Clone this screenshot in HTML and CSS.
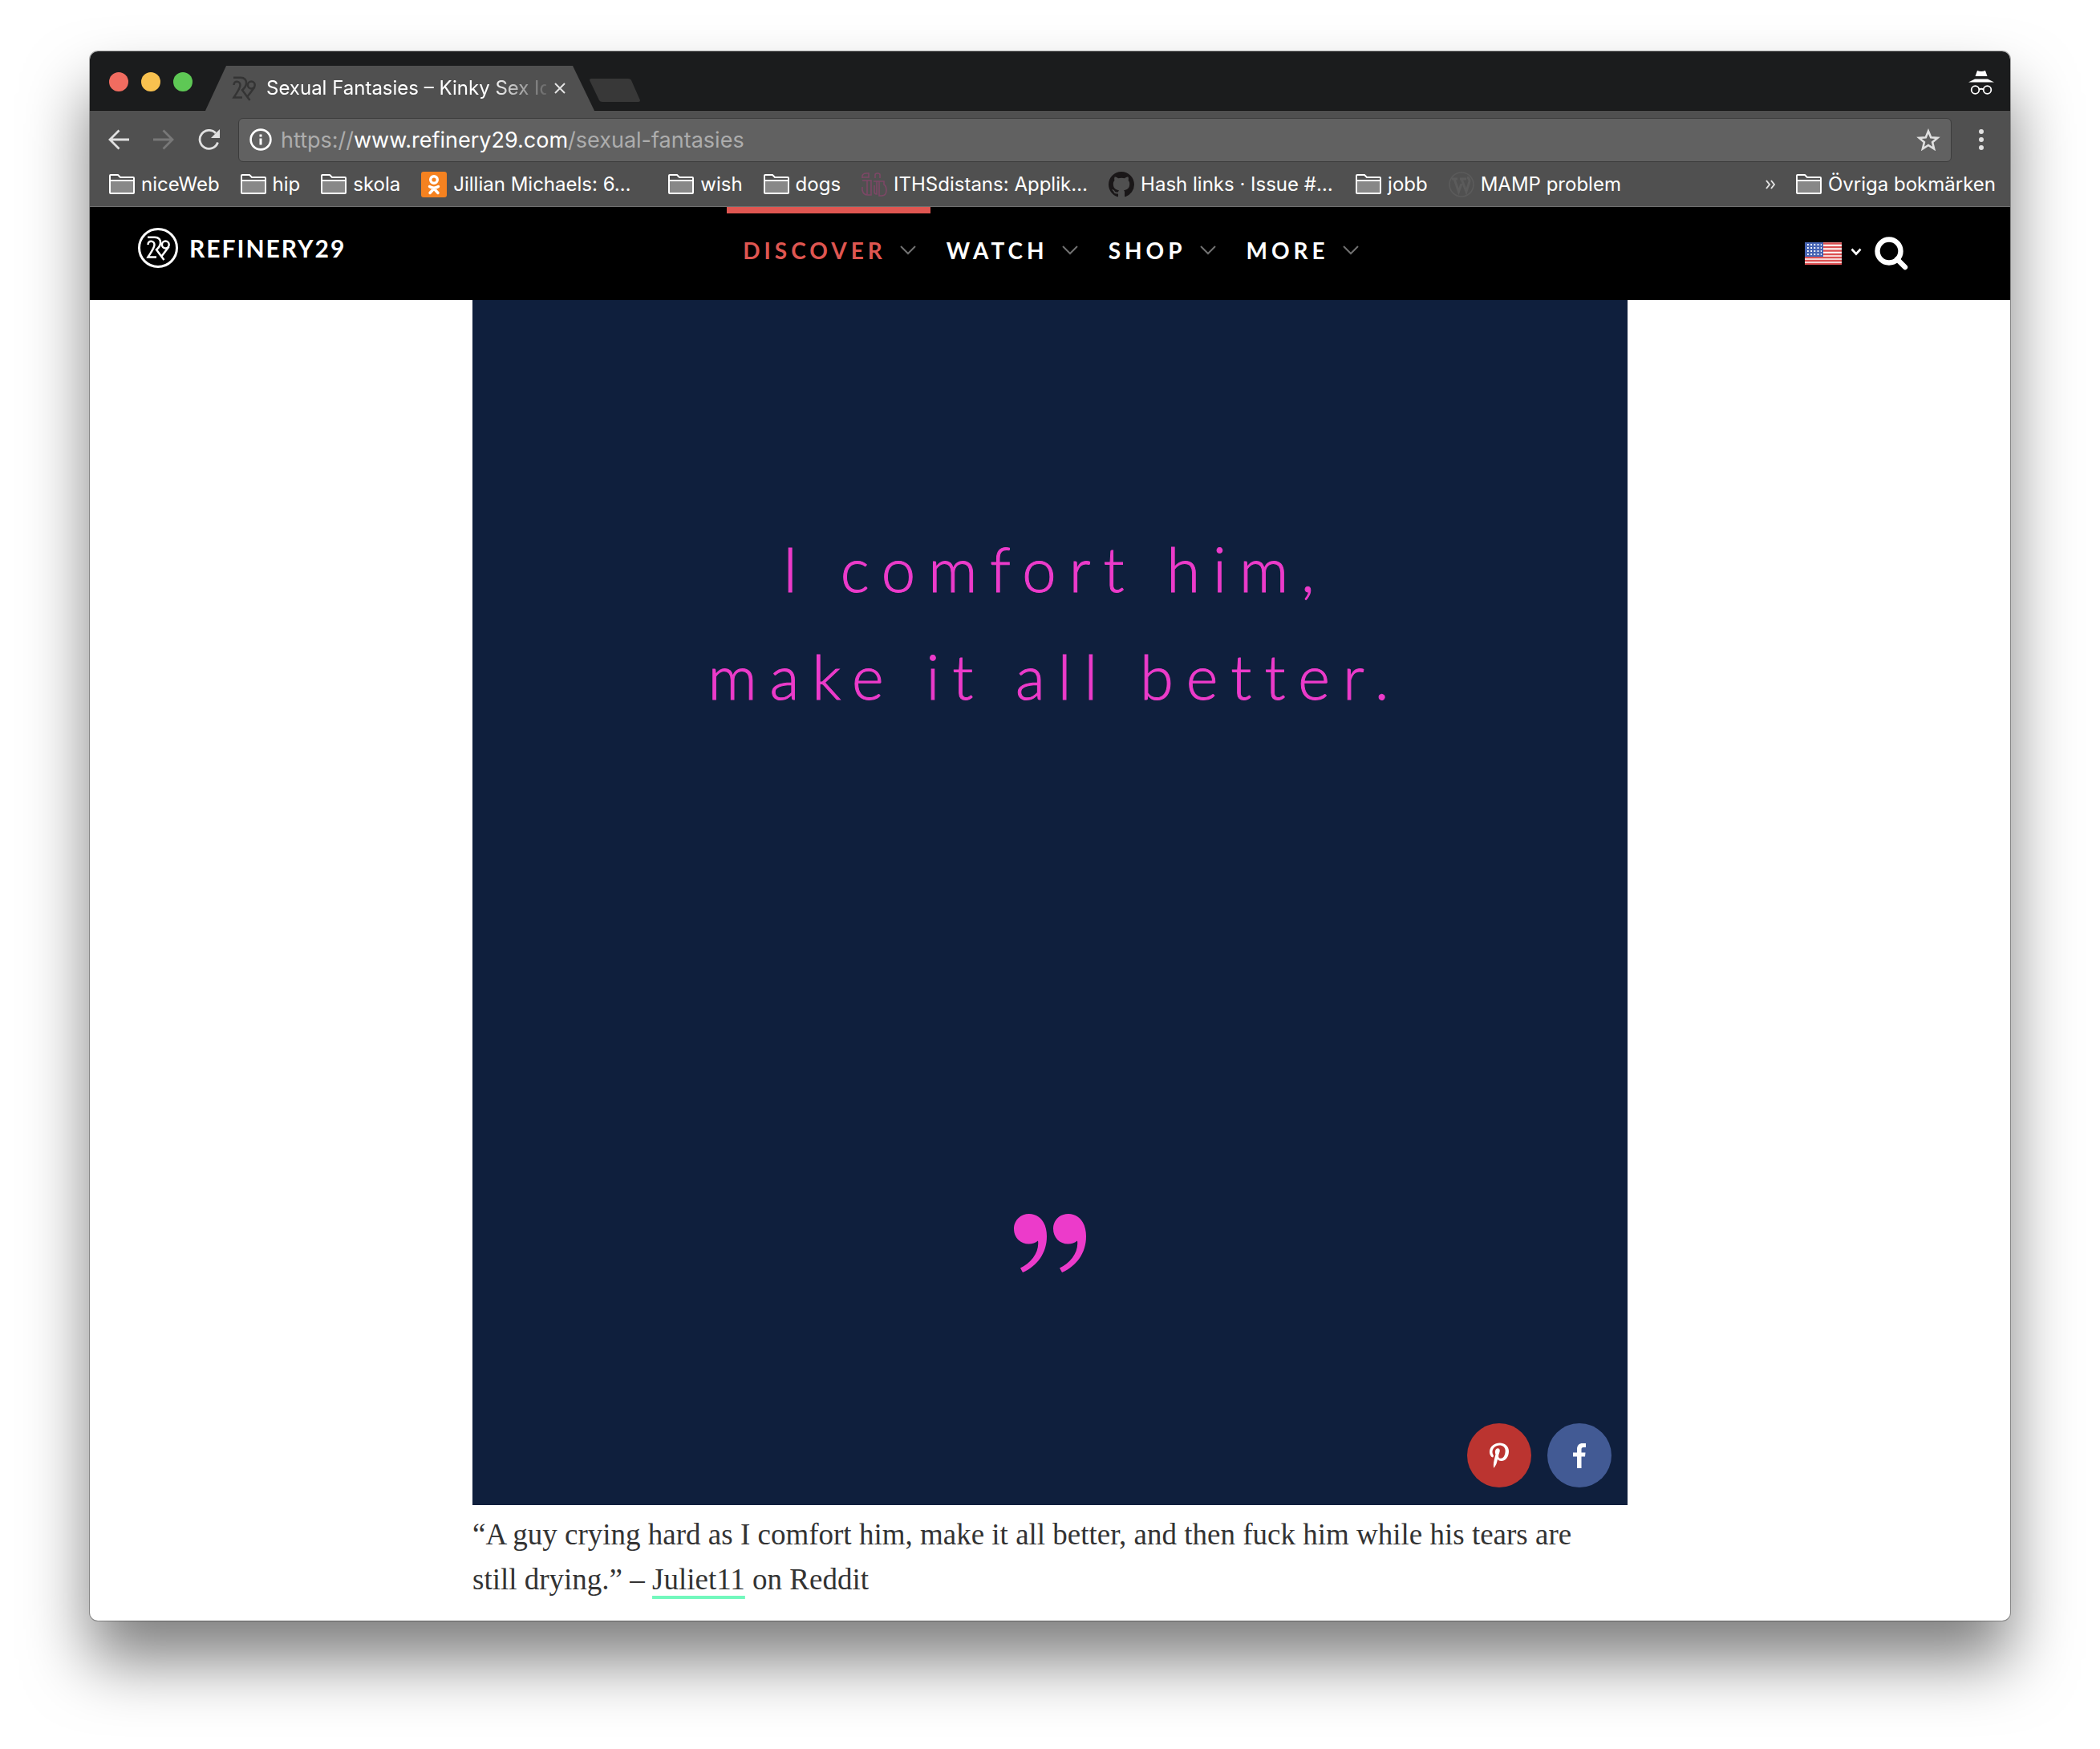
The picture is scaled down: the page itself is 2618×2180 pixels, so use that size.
FILE: index.html
```html
<!DOCTYPE html>
<html lang="en">
<head>
<meta charset="utf-8">
<title>Sexual Fantasies – Kinky Sex Ideas</title>
<link rel="stylesheet" href="styles.css">
</head>
<body>
<svg class="sprite" aria-hidden="true">
  <symbol id="folder" viewBox="0 0 32 25">
    <path d="M1 8h30v16H1z" fill="#888"/>
    <path d="M1 22V2q0-1 1-1h9l3 3h16q1 0 1 1v18q0 1-1 1H2q-1 0-1-1zM1 8h30" fill="none" stroke="#fff" stroke-width="2"/>
  </symbol>
  <symbol id="monogram" viewBox="0 0 30 31">
    <g fill="none" stroke="currentColor" stroke-width="2.500">
      <path d="M2 1.800h9c5 0 7.500 3 7 7.500-.5 3.500-2.500 6-5 8L22.500 30"/>
      <path d="M2.500 11c0-6 8-5.500 8 0 0 4-4 9-8 15.500h10.500"/>
      <circle cx="24.300" cy="11" r="4.400"/>
      <path d="M28.500 13.500L19 26"/>
    </g>
  </symbol>
  <symbol id="chevron" viewBox="0 0 20 12">
    <path d="M1 1l9 9 9-9" fill="none" stroke="currentColor" stroke-width="2"/>
  </symbol>
</svg>

<div class="window">
  <header class="tabstrip">
    <div class="lights">
      <button class="light light-close" aria-label="Close window"></button>
      <button class="light light-min" aria-label="Minimize"></button>
      <button class="light light-max" aria-label="Zoom"></button>
    </div>
    <div class="tab">
      <svg class="tab-icon" aria-hidden="true"><use href="#monogram"/></svg>
      <span class="tab-title">Sexual Fantasies – Kinky Sex Ideas</span>
      <button class="tab-close" aria-label="Close tab"><svg viewBox="0 0 14 14" width="14" height="14"><path d="M1 1l12 12M13 1L1 13" stroke="#e4e4e4" stroke-width="2"/></svg></button>
    </div>
    <button class="new-tab" aria-label="New tab"><svg viewBox="0 0 63 29" width="63" height="29"><path d="M2 0h46q3 0 4 2l11 25q0 2-2 2H16q-3 0-4-2L0 2q0-2 2-2z" fill="#383838"/></svg></button>
    <svg class="incognito" viewBox="0 0 32 30" width="32" height="30" fill="#fff" role="img" aria-label="Incognito">
      <path d="M11 0q5 2 10 0l2.500 7H8.500zM8 10.500h16l8 4H0z"/>
      <g fill="none" stroke="#fff" stroke-width="1.800"><circle cx="8.500" cy="24" r="4.800"/><circle cx="23.500" cy="24" r="4.800"/><path d="M13 23.500q3-1.500 6 0"/></g>
    </svg>
  </header>

  <div class="toolbar">
    <button class="tool" aria-label="Back"><svg viewBox="0 0 26 26" width="26" height="26"><path d="M26 13H2M13.500 1.500L2 13l11.500 11.500" fill="none" stroke="#e0e0e0" stroke-width="2.800"/></svg></button>
    <button class="tool" aria-label="Forward" disabled><svg viewBox="0 0 26 26" width="26" height="26"><path d="M0 13h24M12.500 1.500L24 13 12.500 24.500" fill="none" stroke="#787878" stroke-width="2.800"/></svg></button>
    <button class="tool" aria-label="Reload"><svg viewBox="0 0 28 26" width="28" height="26"><path d="M22 5A11.500 11.500 0 1 0 24.500 16.500" fill="none" stroke="#e0e0e0" stroke-width="2.800"/><path d="M27 0v11H16z" fill="#e0e0e0"/></svg></button>
    <div class="omnibox">
      <svg viewBox="0 0 28 28" width="28" height="28" aria-hidden="true"><circle cx="14" cy="14" r="12.400" fill="none" stroke="#fff" stroke-width="2.600"/><path d="M12.500 7.500h3v3h-3zM12.500 12.500h3v8h-3z" fill="#fff"/></svg>
      <div class="url" role="textbox" aria-label="Address" contenteditable="true" spellcheck="false">https://<b>www.refinery29.com</b>/sexual-fantasies</div>
      <button class="star" aria-label="Bookmark this page"><svg viewBox="0 0 30 28" width="30" height="28"><path d="M15 3.500l3.200 7.800 8.300.6-6.400 5.400 2 8.200L15 21l-7.100 4.500 2-8.200-6.400-5.400 8.300-.6z" fill="none" stroke="#e0e0e0" stroke-width="2.600"/></svg></button>
    </div>
    <button class="menu" aria-label="Menu"><svg viewBox="0 0 6 26" width="6" height="26" fill="#e0e0e0"><circle cx="3" cy="3" r="3"/><circle cx="3" cy="13" r="3"/><circle cx="3" cy="23" r="3"/></svg></button>
  </div>

  <nav class="bookmarks" aria-label="Bookmarks">
    <a class="mark" href="#"><svg class="folder"><use href="#folder"/></svg><span>niceWeb</span></a>
    <a class="mark" href="#"><svg class="folder"><use href="#folder"/></svg><span>hip</span></a>
    <a class="mark" href="#"><svg class="folder"><use href="#folder"/></svg><span>skola</span></a>
    <a class="mark mark-site" href="#"><svg viewBox="0 0 32 32" width="32" height="32"><rect width="32" height="32" rx="3" fill="#f58220"/><g fill="none" stroke="#fff" stroke-width="3.400" stroke-linecap="round"><circle cx="16" cy="10" r="4.300"/><path d="M10.500 18.500q5.500 3.500 11 0M16 21l-5 5.500M16 21l5 5.500"/></g></svg><span>Jillian Michaels: 6…</span></a>
    <a class="mark" href="#"><svg class="folder"><use href="#folder"/></svg><span>wish</span></a>
    <a class="mark" href="#"><svg class="folder"><use href="#folder"/></svg><span>dogs</span></a>
    <a class="mark mark-site" href="#"><svg viewBox="0 0 32 32" width="32" height="32"><g fill="none" stroke="#7d4766" stroke-width="1.600"><path d="M1 8V5q1-3 5-3h3v5H1M17 8V4q0-2 3-2t3 2v4M1 11h11v18H8q-6 0-7-6v-4M7 11v17M15 12h13v4q3 2 3 7 0 7-6 7h-3V12M16 17v8q0 3 3 3V12"/></g></svg><span>ITHSdistans: Applik…</span></a>
    <a class="mark mark-site" href="#"><svg viewBox="0 0 16 16" width="32" height="32"><path fill="#1a1718" d="M8 0C3.580 0 0 3.580 0 8c0 3.540 2.290 6.530 5.470 7.590.4.070.55-.17.55-.38 0-.19-.01-.82-.01-1.490-2.010.37-2.530-.49-2.690-.94-.09-.23-.48-.94-.82-1.130-.28-.15-.68-.52-.01-.53.63-.01 1.080.58 1.230.82.72 1.210 1.870.87 2.330.66.070-.52.28-.87.51-1.070-1.780-.2-3.640-.89-3.640-3.950 0-.87.31-1.590.82-2.150-.08-.2-.36-1.020.08-2.120 0 0 .67-.21 2.200.82.64-.18 1.320-.27 2-.27s1.360.09 2 .27c1.530-1.040 2.200-.82 2.200-.82.44 1.100.16 1.920.08 2.120.51.56.82 1.270.82 2.150 0 3.070-1.870 3.750-3.650 3.950.29.25.54.73.54 1.480 0 1.070-.01 1.930-.01 2.200 0 .21.15.46.55.38A8.010 8.010 0 0 0 16 8c0-4.420-3.580-8-8-8z"/></svg><span>Hash links · Issue #…</span></a>
    <a class="mark" href="#"><svg class="folder"><use href="#folder"/></svg><span>jobb</span></a>
    <a class="mark" href="#"><svg viewBox="0 0 32 32" width="32" height="32"><g fill="none" stroke="#5b5b5b"><circle cx="16" cy="16" r="15" stroke-width="1.600"/><path d="M4 9h7M14 9h8M7 9l5.500 16L16 15M16 9l6 16 4-13q0-4-3-5" stroke-width="3"/></g></svg><span>MAMP problem</span></a>
    <button class="more" aria-label="More bookmarks"><svg viewBox="0 0 12 12" width="12" height="12"><path d="M1 1l4 5-4 5M7 1l4 5-4 5" fill="none" stroke="#e0e0e0" stroke-width="2"/></svg></button>
    <a class="mark" href="#"><svg class="folder"><use href="#folder"/></svg><span>Övriga bokmärken</span></a>
  </nav>

  <header class="site">
    <a class="brand" href="#">
      <span class="brand-ring"><svg class="brand-icon" aria-hidden="true"><use href="#monogram"/></svg></span>
      <span>REFINERY29</span>
    </a>
    <nav class="sections" aria-label="Sections">
      <a class="section section-on" href="#">DISCOVER<svg class="chev"><use href="#chevron"/></svg></a>
      <a class="section" href="#">WATCH<svg class="chev"><use href="#chevron"/></svg></a>
      <a class="section" href="#">SHOP<svg class="chev"><use href="#chevron"/></svg></a>
      <a class="section" href="#">MORE<svg class="chev"><use href="#chevron"/></svg></a>
    </nav>
    <div class="utilities">
      <button class="locale" aria-label="Choose edition">
        <svg viewBox="0 0 46 28" width="46" height="28">
          <path fill="#fff" d="M0 0h46v28H0z"/>
          <path d="M0 1.500h46M0 6h46M0 10.500h46M0 15h46M0 19h46M0 23h46M0 27h46" stroke="#dc5052" stroke-width="2.600"/>
          <path fill="#4664b4" d="M0 0h23v18H0z"/>
          <path d="M3 3h18M3 7h18M3 11h18M3 15h18" stroke="#fff" stroke-width="1.800" stroke-dasharray="1.800 2.400"/>
        </svg>
        <svg viewBox="0 0 14 14" width="14" height="14"><path d="M1.500 1.500L7 7.500l5.500-6" fill="none" stroke="#fff" stroke-width="2.600"/></svg>
      </button>
      <button class="search" aria-label="Search"><svg viewBox="0 0 42 42" width="42" height="42" fill="none" stroke="#fff"><circle cx="18" cy="18" r="14.500" stroke-width="6.400"/><path d="M28 28l10 10" stroke-width="6.400" stroke-linecap="round"/></svg></button>
    </div>
  </header>

  <main class="article">
    <figure class="slide">
      <div class="card">
        <p class="quote">I comfort him,<br>make it all better.</p>
        <svg class="mark-end" viewBox="0 0 91 74" width="91" height="74" fill="#ec3bca" aria-hidden="true">
          <path id="comma" d="M0 18.500C0 8 8 0 19 0 32 0 41 11 41 28 41 49 29 65 11 73L8 67.500C22 61 32 47 30 33.500 27 36 23 37.500 18.500 37.500 8 37.500 0 29.500 0 18.500z"/>
          <use href="#comma" x="49"/>
        </svg>
        <div class="share">
          <button class="share-btn share-pin" aria-label="Pin it"><svg viewBox="0 0 384 512" width="24" height="32" fill="#fff"><path d="M204 6.500C101.400 6.500 0 74.900 0 185.600 0 256 39.600 296 63.600 296c9.900 0 15.600-27.600 15.600-35.400 0-9.300-23.700-29.100-23.700-67.800 0-80.400 61.200-137.400 140.400-137.400 68.100 0 118.500 38.700 118.500 109.800 0 53.100-21.300 152.700-90.300 152.700-24.900 0-46.200-18-46.200-43.800 0-37.800 26.400-74.400 26.400-113.400 0-66.200-93.900-54.200-93.900 25.800 0 16.800 2.100 35.400 9.600 50.700-13.800 59.400-42 147.900-42 209.100 0 18.900 2.700 37.500 4.500 56.400 3.400 3.800 1.700 3.400 6.900 1.500 50.400-69 48.600-82.500 71.400-172.800 12.300 23.400 44.100 36 69.300 36 106.200 0 153.900-103.500 153.900-196.800C384 71.300 298.200 6.500 204 6.500z"/></svg></button>
          <button class="share-btn share-fb" aria-label="Share on Facebook"><svg viewBox="0 0 16 31" width="16" height="31" fill="#fff"><path d="M16 0v5h-3c-2 0-2.500 1-2.500 2.700v3.800H15.500l-.5 5h-4.500V31H5V16.500H0v-5h5V7.500C5 2.500 7.500 0 12 0z"/></svg></button>
        </div>
      </div>
      <figcaption class="caption">“A guy crying hard as I comfort him, make it all better, and then fuck him while his tears are still drying.” – <a href="#">Juliet11</a> on Reddit</figcaption>
    </figure>
  </main>
</div>
</body>
</html>
```
FILE: styles.css
```css
* { box-sizing: border-box; }

body {
  margin: 0;
  padding: 64px 112px 160px;
  background: #fff;
  font-family: Inter, "Liberation Sans", sans-serif;
}

button {
  padding: 0;
  border: 0;
  background: none;
  color: inherit;
  font: inherit;
}

a { color: inherit; text-decoration: none; }
svg { display: block; flex: none; }
.sprite { position: absolute; width: 0; height: 0; }

.window {
  border-radius: 10px;
  overflow: hidden;
  background: #fff;
  box-shadow: 0 0 0 1px rgba(0, 0, 0, .3), 0 50px 80px rgba(0, 0, 0, .5);
}

/* Tab strip */
.tabstrip {
  display: flex;
  align-items: flex-end;
  height: 74px;
  background: #1b1c1d;
  box-shadow: inset 0 -1px #101010;
}

.lights {
  display: flex;
  gap: 16px;
  padding: 0 16px 24px 24px;
}

.light { width: 24px; height: 24px; border-radius: 50%; }
.light-close { background: #f16c60; }
.light-min { background: #f8c14f; }
.light-max { background: #5ec855; }

.tab {
  display: flex;
  align-items: center;
  width: 485px;
  height: 56px;
  padding: 0 36px 0 33px;
  background: #505050;
  clip-path: polygon(26px 0, 458px 0, 100% 100%, 0 100%);
}

.tab-icon { width: 30px; height: 31px; color: #343434; }

.tab-title {
  flex: 1;
  margin: 0 10px 0 13px;
  overflow: hidden;
  white-space: nowrap;
  color: #fff;
  font-size: 24px;
  line-height: 32px;
  mask-image: linear-gradient(to right, #000 280px, transparent 360px);
}

.new-tab { margin: 0 auto 11px -6px; }
.incognito { margin: 0 20px 20px 0; }

/* Toolbar */
.toolbar {
  display: flex;
  align-items: center;
  gap: 30px;
  height: 64px;
  padding: 8px 33px 0 23px;
  background: #505050;
}

.omnibox {
  display: flex;
  align-items: center;
  flex: 1;
  gap: 11px;
  height: 55px;
  margin: 0 4px 0 -8px;
  padding: 0 13px;
  border: 1px solid #3c3c3c;
  border-radius: 6px;
  background: #616161;
}

.url {
  flex: 1;
  overflow: hidden;
  padding-top: 2px;
  white-space: nowrap;
  color: #adadad;
  font-size: 27px;
  line-height: 40px;
}

.url b { color: #fff; font-weight: 400; }

/* Bookmarks */
.bookmarks {
  display: flex;
  align-items: center;
  gap: 26px;
  height: 56px;
  padding: 0 18px 0 24px;
  border-bottom: 1px solid #707070;
  background: #505050;
  color: #fff;
  font-size: 24px;
  line-height: 32px;
}

.mark { display: flex; align-items: center; gap: 8px; white-space: nowrap; }
.mark-site { width: 282px; }
.folder { width: 32px; height: 25px; }
.more { margin-left: auto; }

/* Site header */
.site {
  display: grid;
  grid-template-columns: 1fr auto 1fr;
  align-items: start;
  height: 116px;
  padding: 0 60px;
  background: #000;
  color: #fff;
  font-family: Lato, sans-serif;
  font-weight: 700;
}

.brand {
  display: flex;
  align-items: center;
  gap: 14px;
  padding-top: 26px;
  font-size: 30px;
  line-height: 50px;
  letter-spacing: 2px;
}

.brand-ring {
  display: grid;
  place-items: center;
  width: 50px;
  height: 50px;
  border: 3px solid #fff;
  border-radius: 50%;
}

.brand-icon { width: 30px; height: 31px; }

.sections { display: flex; }

.section {
  display: flex;
  align-items: center;
  gap: 17px;
  padding: 28px 18px 24px 20px;
  border-top: 8px solid transparent;
  font-size: 28px;
  line-height: 36px;
  letter-spacing: 5px;
}

.section-on { border-color: #df5651; color: #df5651; }
.chev { width: 20px; height: 12px; color: #707070; }

.utilities {
  display: flex;
  align-items: center;
  justify-content: flex-end;
  gap: 16px;
  padding: 37px 67px 0 0;
}

.locale { display: flex; align-items: center; gap: 11px; }

/* Article */
.article { padding-bottom: 12px; }

.slide { max-width: 1440px; margin: 0 auto; }

.card {
  position: relative;
  display: flex;
  flex-direction: column;
  align-items: center;
  justify-content: space-between;
  aspect-ratio: 720 / 751;
  padding: 268px 0 289px;
  background: #0f1f3d;
}

.quote {
  margin: 0;
  padding-left: 12px;
  color: #ec3bca;
  font-family: Lato, sans-serif;
  font-size: 76px;
  font-weight: 300;
  line-height: 134px;
  letter-spacing: 16px;
  text-align: center;
  -webkit-text-stroke: 1px #ec3bca;
}

.share {
  position: absolute;
  right: 20px;
  bottom: 22px;
  display: flex;
  gap: 20px;
}

.share-btn {
  display: grid;
  place-items: center;
  width: 80px;
  height: 80px;
  border-radius: 50%;
}

.share-pin { background: #bb3430; }
.share-fb { background: #425a94; }

.caption {
  padding: 9px 20px 11px 0;
  color: #333;
  font-family: Georgia, "Liberation Serif", serif;
  font-size: 37px;
  line-height: 56px;
}

.caption a {
  text-decoration: underline 4px #72f8bd;
  text-decoration-skip-ink: none;
  text-underline-offset: 8px;
}
```
